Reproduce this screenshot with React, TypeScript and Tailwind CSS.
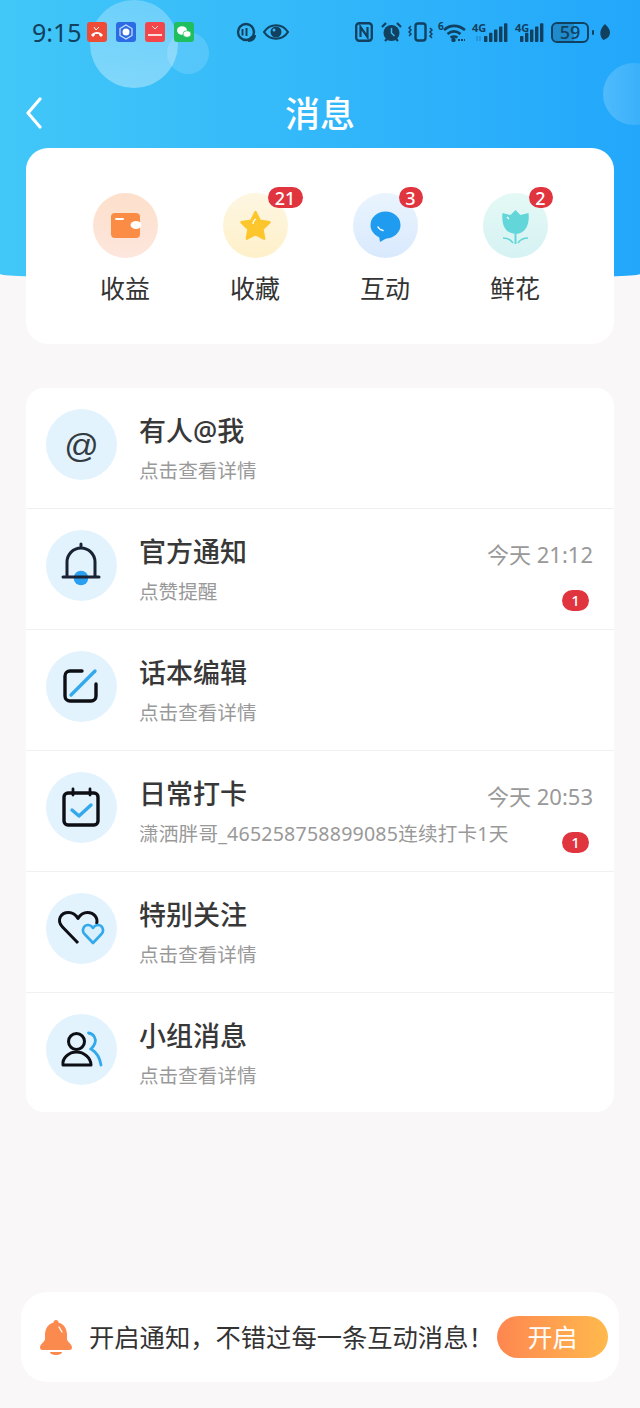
import type { ReactNode } from 'react';

const font = { fontFamily: '"Noto Sans", "Noto Sans CJK SC", sans-serif' };

function Badge({ children, className }: { children: ReactNode; className: string }) {
  return (
    <span className={`flex items-center justify-center rounded-full bg-[#e0353f] text-white font-medium ${className}`}>
      {children}
    </span>
  );
}

function AppIcon({ className, children }: { className: string; children: ReactNode }) {
  return (
    <span className={`flex h-5 w-5 items-center justify-center rounded-[3px] ${className}`}>
      <svg viewBox="0 0 20 20" className="h-5 w-5">{children}</svg>
    </span>
  );
}

function Signal({ offset, small }: { offset: number; small?: boolean }) {
  const bars = [0, 1, 2, 3, 4];
  return (
    <g transform={`translate(${offset} 0)`}>
      {bars.map((b) => (
        <rect key={b} x={b * 5} y={14 - b * 3.2} width="3.400" height={6 + b * 3.2} rx="0.8" fill="#12405f" />
      ))}
      {small && <path d="M-7 14v5M-4 14v5" stroke="#12405f" strokeWidth="0.9" opacity="0.5" />}
    </g>
  );
}

function StatusBar() {
  return (
    <div className="relative flex h-5 items-center pl-8 pr-[30px] text-[#12405f]">
      <span className="w-[55px] text-[25px] leading-5">9:15</span>
      <div className="flex gap-[9px]">
        <AppIcon className="bg-[#ef4c38]">
          <path d="M4 13c3-4 9-4 12 0l-2 2-2-2v-1H8v1l-2 2z" fill="#fff" />
          <path d="M7 5l2 3 3-3" stroke="#fff" fill="none" strokeWidth="1" />
        </AppIcon>
        <AppIcon className="bg-[#2b6be4]">
          <path d="M10 3l6 3.500v7L10 17l-6-3.500v-7z" fill="none" stroke="#cfe0ff" strokeWidth="1.200" />
          <circle cx="10" cy="10" r="3.500" fill="#fff" />
        </AppIcon>
        <AppIcon className="bg-[#f2464b]">
          <path d="M7 4l3 3 3-3" stroke="#fff" fill="none" strokeWidth="0.800" />
          <rect x="3" y="12" width="14" height="2" fill="#fff" opacity="0.8" />
        </AppIcon>
        <AppIcon className="bg-[#1fbf5f]">
          <ellipse cx="8" cy="8.500" rx="5" ry="4.200" fill="#fff" />
          <ellipse cx="13" cy="12" rx="4" ry="3.300" fill="#fff" stroke="#1fbf5f" strokeWidth="0.700" />
        </AppIcon>
      </div>
      <div className="ml-[42px] flex items-center gap-[7px]">
        <svg viewBox="0 0 20 20" className="h-5 w-5">
          <circle cx="10" cy="10" r="8" fill="none" stroke="#12405f" strokeWidth="2.400" />
          <path d="M6.500 7v6.500M10.500 6v8" stroke="#12405f" strokeWidth="2" />
          <path d="M12 20c0-4 3-7 8-7 0 4-3 7-8 7z" fill="#12405f" />
        </svg>
        <svg viewBox="0 0 26 16" className="h-4 w-[26px]">
          <path d="M1 8c6-9 18-9 24 0-6 9-18 9-24 0z" fill="none" stroke="#12405f" strokeWidth="2.200" />
          <circle cx="13" cy="8" r="5.500" fill="#12405f" />
          <circle cx="11" cy="6" r="1.500" fill="#3bb4f8" />
        </svg>
      </div>
      <div className="ml-auto flex items-center">
        <svg viewBox="0 0 18 20" className="h-5 w-[18px]">
          <rect x="1.200" y="1.200" width="15.600" height="17.600" rx="3" fill="none" stroke="#12405f" strokeWidth="2.400" />
          <path d="M5.500 15V5l7 10V5" fill="none" stroke="#12405f" strokeWidth="2.200" />
        </svg>
        <svg viewBox="0 0 21 21" className="ml-[8px] h-[21px] w-[21px]">
          <circle cx="10.500" cy="11" r="8" fill="#12405f" />
          <path d="M10.500 6v5l3 3" stroke="#3bb4f8" fill="none" strokeWidth="1.500" />
          <path d="M1 5l4-4M20 5l-4-4M4 19l2-2M17 19l-2-2" stroke="#12405f" strokeWidth="2.200" />
        </svg>
        <svg viewBox="0 0 25 20" className="ml-[6px] h-5 w-[25px]">
          <rect x="7.500" y="1.500" width="10" height="17" rx="2.500" fill="none" stroke="#12405f" strokeWidth="2.400" />
          <path d="M3 4l-2 2 2 2-2 2 2 2-2 2M22 6l2 2-2 2 2 2-2 2 2 2" fill="none" stroke="#12405f" strokeWidth="1.500" />
        </svg>
        <div className="relative ml-[5px] h-5 w-7">
          <svg viewBox="0 0 28 20" className="h-5 w-7">
            <path d="M6 8c6-5.500 14-5.500 21 0M9.500 12c4-3.200 9-3.200 13 0M12.500 15.500c2-1.200 5-1.200 7 0" fill="none" stroke="#12405f" strokeWidth="2.600" />
            <circle cx="15.500" cy="18" r="2.200" fill="#12405f" />
            <path d="M20 18h7" stroke="#12405f" strokeWidth="2" strokeDasharray="2 1" />
          </svg>
          <span className="absolute left-0 top-[-1px] text-[10px] font-bold leading-[10px]">6</span>
        </div>
        <div className="relative ml-[6px] h-5 w-[36px]">
          <svg viewBox="0 0 36 20" className="h-5 w-[36px]"><Signal offset={12} small /></svg>
          <span className="absolute left-0 top-[1px] text-[11px] font-bold leading-[10px]">4G</span>
        </div>
        <div className="relative ml-[7px] h-5 w-[29px]">
          <svg viewBox="0 0 29 20" className="h-5 w-[29px]"><Signal offset={5} /></svg>
          <span className="absolute left-0 top-[1px] text-[11px] font-bold leading-[10px]">4G</span>
        </div>
        <div className="relative ml-[7px] flex h-[21px] w-[38px] items-center justify-center overflow-hidden rounded-[6px] border-2 border-[#12405f] text-[18px] font-medium leading-none">
          <span className="absolute inset-y-0 left-0 w-[21px] bg-[#12405f]/30" />
          <span className="relative">59</span>
        </div>
        <svg viewBox="0 0 19 16" className="ml-[2px] h-4 w-[19px]">
          <rect x="1" y="6" width="2" height="5" rx="1" fill="#12405f" />
          <path d="M14 0c4 4 6 7 4.500 11-1 3-4 4-6 5-4-3-5-10 1.500-16z" fill="#12405f" />
        </svg>
      </div>
    </div>
  );
}

const quickItems = [
  {
    label: '收益',
    circle: 'bg-linear-to-b from-[#fde0cb] to-[#fde6dd]',
    icon: (
      <svg viewBox="0 0 65 65" className="h-[65px] w-[65px]">
        <rect x="18" y="20" width="29" height="25" rx="4" fill="#fb8c46" />
        <rect x="22" y="25" width="9" height="2" rx="1" fill="#fff" />
        <ellipse cx="43" cy="32" rx="5.500" ry="4" fill="#fff" />
      </svg>
    ),
  },
  {
    label: '收藏',
    badge: '21',
    circle: 'bg-linear-to-b from-[#fdf6e2] to-[#fef0c9]',
    icon: (
      <svg viewBox="0 0 65 65" className="h-[65px] w-[65px]">
        <path
          d="M32.500 19l4.400 8.800 9.600 1.500-7 6.800 1.700 9.600-8.700-4.600-8.700 4.600 1.700-9.600-7-6.800 9.600-1.500z"
          fill="#fcc62c"
          stroke="#fcc62c"
          strokeWidth="2.400"
          strokeLinejoin="round"
        />
        <path d="M30 31c0-2 1-4 3-5" stroke="#fff" strokeWidth="1.200" fill="none" />
      </svg>
    ),
  },
  {
    label: '互动',
    badge: '3',
    circle: 'bg-linear-to-b from-[#e9f4fd] to-[#d9e9fd]',
    icon: (
      <svg viewBox="0 0 65 65" className="h-[65px] w-[65px]">
        <ellipse cx="32.500" cy="32" rx="15" ry="13.500" fill="#1f9bf0" />
        <path d="M26 43l1 6 7-4z" fill="#1f9bf0" />
        <path d="M25 34c1 2 3 3 5 3.500" stroke="#fff" strokeWidth="1.500" fill="none" strokeLinecap="round" />
      </svg>
    ),
  },
  {
    label: '鲜花',
    badge: '2',
    circle: 'bg-linear-to-b from-[#e4f9f5] to-[#d6f2f3]',
    icon: (
      <svg viewBox="0 0 65 65" className="h-[65px] w-[65px]">
        <path d="M32.500 17l5 5 8-2c1 9-1 20-13 21-12-1-14-12-13-21l8 2z" fill="#62d6d9" />
        <path d="M32.500 40v11" stroke="#62d6d9" strokeWidth="2" />
        <path d="M20 45c4 0 8 2 10 5M45 45c-4 0-8 2-10 5" stroke="#62d6d9" strokeWidth="1.600" fill="none" />
        <path d="M24 24l2 2" stroke="#fff" strokeWidth="1.200" />
      </svg>
    ),
  },
];

const ink = '#1a2333';
const blue = '#33a9ec';

const rows: { title: string; sub: string; time?: string; icon: ReactNode }[] = [
  {
    title: '有人@我',
    sub: '点击查看详情',
    icon: <span className="text-[34px] leading-none text-[#333b42]" style={{ fontFamily: '"Liberation Sans", sans-serif' }}>@</span>,
  },
  {
    title: '官方通知',
    sub: '点赞提醒',
    time: '今天 21:12',
    icon: (
      <svg viewBox="0 0 71 71" className="h-[71px] w-[71px]">
        <circle cx="35" cy="48" r="7.300" fill="#2a9ff0" />
        <path d="M21 46V32a14 14 0 0 1 28 0v14M35 18v-4M17 47h36" fill="none" stroke={ink} strokeWidth="3" strokeLinecap="round" />
      </svg>
    ),
  },
  {
    title: '话本编辑',
    sub: '点击查看详情',
    icon: (
      <svg viewBox="0 0 71 71" className="h-[71px] w-[71px]">
        <path d="M36 20H24a5 5 0 0 0-5 5v20a5 5 0 0 0 5 5h21a5 5 0 0 0 5-5V33" fill="none" stroke="#0d0f14" strokeWidth="3.400" strokeLinecap="round" />
        <path d="M25 44l24-24" stroke={blue} strokeWidth="3.400" strokeLinecap="round" />
      </svg>
    ),
  },
  {
    title: '日常打卡',
    sub: '潇洒胖哥_465258758899085连续打卡1天',
    time: '今天 20:53',
    icon: (
      <svg viewBox="0 0 71 71" className="h-[71px] w-[71px]">
        <rect x="18" y="21" width="34" height="32" rx="4" fill="none" stroke="#0d0f14" strokeWidth="3.400" />
        <path d="M27 17v6M44 17v6" stroke="#0d0f14" strokeWidth="2.800" strokeLinecap="round" />
        <path d="M26 38l7 6 12-11" fill="none" stroke={blue} strokeWidth="3.400" strokeLinecap="round" strokeLinejoin="round" />
      </svg>
    ),
  },
  {
    title: '特别关注',
    sub: '点击查看详情',
    icon: (
      <svg viewBox="0 0 71 71" className="h-[71px] w-[71px]">
        <path d="M32 50L16.500 34C10 27 15 19.500 22.500 19.500c4 0 7.500 2.500 9.500 6 2-3.500 5.500-6 9.500-6 6.500 0 11 5.500 9 11.500" fill="none" stroke="#0d0f14" strokeWidth="3" strokeLinejoin="round" />
        <path d="M47 50l-8.500-9C35 37 38 32 42 32c2.500 0 4 1.500 5 3 1-1.500 2.500-3 5-3 4 0 7 5 3.500 9z" fill="#d8effc" stroke={blue} strokeWidth="2.600" strokeLinejoin="round" />
      </svg>
    ),
  },
  {
    title: '小组消息',
    sub: '点击查看详情',
    icon: (
      <svg viewBox="0 0 71 71" className="h-[71px] w-[71px]">
        <circle cx="30.500" cy="27.500" r="8" fill="none" stroke="#0d0f14" strokeWidth="3" />
        <path d="M17 51c-1-7 6-13 13.500-13S45 44 45 51z" fill="none" stroke="#0d0f14" strokeWidth="3" strokeLinejoin="round" />
        <path d="M42.500 19c5.500 1 8 6 6.500 10-1 3-3 5-4 6 5 3 9 9 10 16" fill="none" stroke={blue} strokeWidth="2.800" strokeLinecap="round" />
      </svg>
    ),
  },
];

export default function App() {
  return (
    <div className="flex h-[1408px] w-[640px] flex-col overflow-hidden bg-[#faf7f8]" style={font}>
      <header className="relative h-[280px] shrink-0 overflow-hidden rounded-b-[320px_6px] bg-linear-to-r from-[#42c7f8] to-[#22a7fb]">
        <span className="absolute left-[90px] top-0 h-[88px] w-[88px] rounded-full bg-linear-to-b from-white/25 to-white/35" />
        <span className="absolute left-[167px] top-[32px] h-[42px] w-[42px] rounded-full bg-white/15" />
        <span className="absolute left-[603px] top-[63px] h-[62px] w-[62px] rounded-full bg-linear-to-r from-white/20 to-white/5" />
        <div className="pt-[22px]">
          <StatusBar />
        </div>
        <div className="relative mt-[47px] flex h-12 items-center justify-center">
          <svg viewBox="0 0 18 32" className="absolute left-[25px] h-8 w-[18px]">
            <path d="M15 2L3 16l12 14" fill="none" stroke="#fff" strokeWidth="3.200" strokeLinecap="round" strokeLinejoin="round" />
          </svg>
          <h1 className="text-[35px] font-medium leading-none text-white">消息</h1>
        </div>
      </header>

      <section className="relative mx-[26px] mt-[-132px] grid h-[196px] grid-cols-4 rounded-[22px] bg-white px-[34px] pt-[45px]">
        {quickItems.map((item) => (
          <div key={item.label} className="flex flex-col items-center">
            <div className={`relative h-[65px] w-[65px] rounded-full ${item.circle}`}>
              {item.icon}
              {item.badge && (
                <Badge className={`absolute top-[-6px] h-[21px] text-[18px] leading-none ${item.badge.length > 1 ? 'left-[45px] w-[35px]' : 'left-[46px] w-[24px]'}`}>
                  {item.badge}
                </Badge>
              )}
            </div>
            <span className="mt-[12px] text-[25px] leading-9 text-[#333333]">{item.label}</span>
          </div>
        ))}
      </section>

      <section className="mx-[26px] mt-[44px] h-[724px] overflow-hidden rounded-[18px] bg-white">
        {rows.map((row, i) => (
          <div
            key={row.title}
            className={`flex h-[121px] pl-[20px] pr-[21px] ${i < rows.length - 1 ? 'border-b border-[#f1eff0]' : ''}`}
          >
            <div className="mt-[21px] flex h-[71px] w-[71px] shrink-0 items-center justify-center rounded-full bg-[#e3f3fd]">
              {row.icon}
            </div>
            <div className="ml-[22px] min-w-0 flex-1 whitespace-nowrap pt-[25px]">
              <div className="text-[27px] font-medium leading-9 text-[#383838]">{row.title}</div>
              <div className={`mt-[8px] text-[19.6px] leading-7 text-[#999999] ${row.sub.length > 6 && row.time ? 'tracking-[0.2px]' : ''}`}>{row.sub}</div>
            </div>
            {row.time && (
              <div className="flex shrink-0 flex-col items-end pt-[31px]">
                <span className="text-[22px] leading-7 text-[#999999]">{row.time}</span>
                <Badge className="mr-[4px] mt-[22px] h-[21px] w-[27px] text-[15px] leading-none">1</Badge>
              </div>
            )}
          </div>
        ))}
      </section>

      <footer className="mx-[21px] mb-[26px] mt-auto flex h-[90px] items-center rounded-[26px] bg-white pl-[19px] pr-[11px]">
        <svg viewBox="0 0 32 35" className="h-[35px] w-8 shrink-0">
          <path
            d="M16 0c1.500 0 2.500 1 2.500 2.500C24 4 27 9 27 15v4c0 3 5 5 5 8.500 0 1.500-1 2.500-2.500 2.500h-27C1 30 0 29 0 27.500 0 24 5 22 5 19v-4C5 9 8 4 13.500 2.500 13.500 1 14.500 0 16 0z"
            fill="#fb8a4e"
          />
          <path d="M10 32h12c0 2-3 3-6 3s-6-1-6-3z" fill="#fb8a4e" />
          <path d="M19 7l3 5" stroke="#fff" strokeWidth="1.300" strokeLinecap="round" />
        </svg>
        <span className="ml-[17px] whitespace-nowrap text-[25.300px] leading-9 text-[#333333]">开启通知，不错过每一条互动消息！</span>
        <button className="ml-auto flex h-[42px] w-[111px] shrink-0 items-center justify-center rounded-full bg-linear-to-r from-[#fe8650] to-[#ffb94c] text-[25px] leading-none text-white">
          开启
        </button>
      </footer>
    </div>
  );
}
